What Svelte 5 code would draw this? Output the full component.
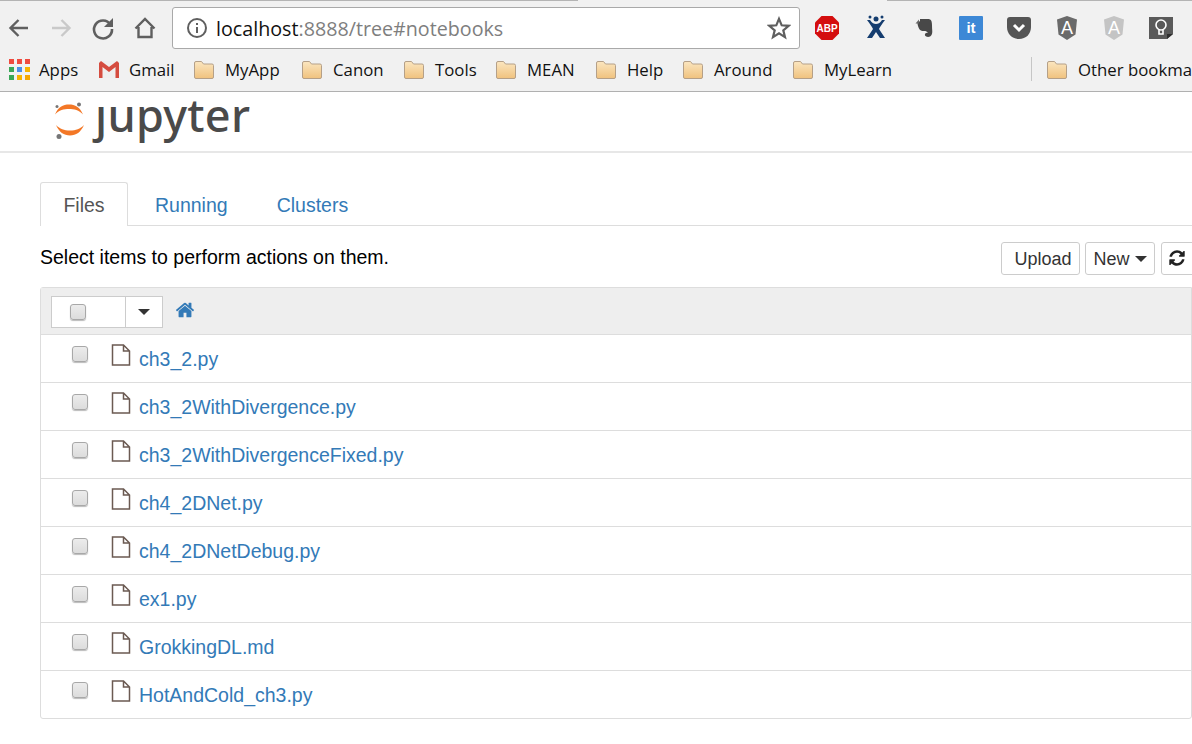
<script>
  const bookmarks = [
    { name: 'MyApp', w: 108 },
    { name: 'Canon', w: 102 },
    { name: 'Tools', w: 92 },
    { name: 'MEAN', w: 100 },
    { name: 'Help', w: 87 },
    { name: 'Around', w: 110 },
    { name: 'MyLearn', w: 239 }
  ];
  const files = [
    'ch3_2.py',
    'ch3_2WithDivergence.py',
    'ch3_2WithDivergenceFixed.py',
    'ch4_2DNet.py',
    'ch4_2DNetDebug.py',
    'ex1.py',
    'GrokkingDL.md',
    'HotAndCold_ch3.py'
  ];
  const appColors = ['#ef4b3f', '#ef4b3f', '#ef4b3f', '#3aa757', '#4a90e8', '#f6b400', '#3aa757', '#f6b400', '#f6a800'];
</script>

{#snippet folder()}
  <svg class="folder" width="22" height="19" viewBox="0 0 22 19">
    <defs>
      <linearGradient id="fold" x1="0" y1="0" x2="0" y2="1">
        <stop offset="0" stop-color="#fbe6c0" />
        <stop offset="1" stop-color="#f0c27e" />
      </linearGradient>
    </defs>
    <path d="M1.500 17V3q0-1.500 1.500-1.500h5.500l2 2.500H19q1.500 0 1.500 1.500V17q0 1.500-1.500 1.500H3q-1.500 0-1.500-1.500z" fill="url(#fold)" stroke="#b5a088" />
  </svg>
{/snippet}

<div class="chrome">
  <div class="strip"></div>
  <div class="toolbar">
    <div class="nav">
      <svg width="28" height="28" viewBox="0 0 28 28"><path d="M23 14H6M13.500 6L5.500 14l8 8" fill="none" stroke="#5f5f5f" stroke-width="2.400" /></svg>
      <svg width="28" height="28" viewBox="0 0 28 28"><path d="M5 14h17M14.500 6l8 8-8 8" fill="none" stroke="#c9c9c9" stroke-width="2.400" /></svg>
      <svg width="28" height="28" viewBox="0 0 28 28"><path d="M21.500 10.500A9 9 0 1 0 23 15" fill="none" stroke="#5f5f5f" stroke-width="2.600" /><path d="M24 4v9h-9z" fill="#5f5f5f" /></svg>
      <svg width="28" height="28" viewBox="0 0 28 28"><path d="M4.500 14.500L14 5l9.500 9.500M7.500 13v10h13V13" fill="none" stroke="#5f5f5f" stroke-width="2.400" /></svg>
    </div>
    <div class="omnibox">
      <svg width="22" height="22" viewBox="0 0 22 22"><circle cx="11" cy="11" r="9" fill="none" stroke="#5f5f5f" stroke-width="2" /><path d="M10 10h2v6h-2zM10 6h2v2h-2z" fill="#5f5f5f" /></svg>
      <span class="url"><b>localhost</b>:8888/tree#notebooks</span>
      <svg class="star" width="24" height="24" viewBox="0 0 24 24"><path d="M12 2.800l2.700 6.500 7 .5-5.400 4.500 1.700 6.800-6-3.700-6 3.700 1.700-6.800L2.300 9.800l7-.5z" fill="none" stroke="#5f5f5f" stroke-width="2.200" /></svg>
    </div>
    <div class="extensions">
      <svg width="26" height="26" viewBox="0 0 26 26"><path d="M7.500 1h11L25 7.500v11L18.500 25h-11L1 18.500v-11z" fill="#d40e0e" /><text x="13" y="17" text-anchor="middle" class="abp">ABP</text></svg>
      <svg width="26" height="28" viewBox="0 0 26 28"><circle cx="13" cy="5" r="2.500" fill="#153d6f" /><circle cx="7" cy="3" r="1.500" fill="#153d6f" /><circle cx="19" cy="3" r="1.500" fill="#153d6f" /><path d="M4 6c3 4 5 7 6 9l-6 9h5l4-6 4 6h5l-6-9c1-2 3-5 6-9h-3c-2 3-4 4-6 4s-4-1-6-4z" fill="#153d6f" /></svg>
      <svg width="24" height="24" viewBox="0 0 24 24"><path d="M8 5V3h8c3 0 4 2 4 6 0 6 1 7-.5 10-1 2.500-5.500 2.500-6.500.500-.5-2 1-3 3-2.500-1-1.500-2-2-4-2-2.500 0-4-.5-5-2.500-1-2-1.500-4-1.500-5.500z" fill="#484848" /><path d="M3.500 7.500L7 3.500v4z" fill="#666" /></svg>
      <div class="it">it</div>
      <svg width="26" height="24" viewBox="0 0 26 24"><path d="M1 4q0-3 3-3h18q3 0 3 3v7c0 7-5 12-12 12S1 18 1 11z" fill="#555" /><path d="M8 9l5 5 5-5" fill="none" stroke="#fff" stroke-width="3" /></svg>
      <svg width="24" height="26" viewBox="0 0 24 26"><path d="M12 1l10 3.500-1.500 15L12 25l-8.500-5.500L2 4.500z" fill="#6a6a6a" /><text x="12" y="19" text-anchor="middle" class="ng">A</text></svg>
      <svg width="24" height="26" viewBox="0 0 24 26"><path d="M12 1l10 3.500-1.500 15L12 25l-8.500-5.500L2 4.500z" fill="#c4c4c4" /><text x="12" y="19" text-anchor="middle" class="ng">A</text></svg>
      <svg width="24" height="24" viewBox="0 0 24 24"><path d="M0 1h24v17l-6 5H0z" fill="#5a5a5a" /><path d="M18 23v-5h6z" fill="#2e2e2e" /><circle cx="12" cy="9" r="5" fill="none" stroke="#fff" stroke-width="1.600" /><path d="M10 14v4h4v-4" fill="none" stroke="#fff" stroke-width="1.600" /></svg>
    </div>
  </div>
  <div class="bookmarks">
    <div class="bm apps">
      <div class="grid">
        {#each appColors as c}
          <i style:background={c}></i>
        {/each}
      </div>
      Apps
    </div>
    <div class="bm gmail">
      <svg width="22" height="18" viewBox="0 0 22 18"><path d="M1 1h20v17H1z" fill="#efefef" /><path d="M1 3v15h3.500V7L11 12l6.500-5v11H21V3l-2-2-8 6-8-6z" fill="#d54c3f" /></svg>
      Gmail
    </div>
    {#each bookmarks as b}
      <div class="bm" style:width="{b.w}px">
        {@render folder()}
        {b.name}
      </div>
    {/each}
    <div class="divider"></div>
    <div class="bm other">
      {@render folder()}
      Other bookmarks
    </div>
  </div>
</div>

<header class="brand">
  <svg width="36" height="42" viewBox="0 0 36 42">
    <path d="M3 13.500C6 6 11 3.500 17 3.500S28 6 31 13.500C27 9 22 8 17 8S7 9 3 13.500z" fill="#f37726" />
    <path d="M4 24C8 28 12 29.500 18 29.500S28 28 32 24C29 31 24 34.500 18 34.500S7 31 4 24z" fill="#f37726" />
    <circle cx="27" cy="3.500" r="2" fill="#767677" />
    <circle cx="5" cy="5.500" r="1.500" fill="#767677" />
    <circle cx="7" cy="35.500" r="2.500" fill="#767677" />
  </svg>
  <span class="wordmark">ȷupyter</span>
</header>

<main>
  <nav class="tabs">
    <div class="tab active">Files</div>
    <div class="tab">Running</div>
    <div class="tab">Clusters</div>
  </nav>
  <div class="actions">
    <span class="hint">Select items to perform actions on them.</span>
    <div class="buttons">
      <div class="btn upload">Upload</div>
      <div class="btn new">New <i class="caret"></i></div>
      <div class="btn refresh">
        <svg width="18" height="18" viewBox="0 0 1792 1792"><path d="M1639 1056q0 5-1 7-64 268-268 434.500t-478 166.500q-146 0-282.500-55t-243.500-157l-129 129q-19 19-45 19t-45-19-19-45v-448q0-26 19-45t45-19h448q26 0 45 19t19 45-19 45l-137 137q71 66 161 102t187 36q134 0 250-65t186-179q11-17 53-117 8-23 30-23h192q13 0 22.500 9.500t9.500 22.500zm25-800v448q0 26-19 45t-45 19h-448q-26 0-45-19t-19-45 19-45l138-138q-148-137-349-137-134 0-250 65t-186 179q-11 17-53 117-8 23-30 23h-199q-13 0-22.500-9.500t-9.500-22.500v-7q65-268 270-434.500t480-166.500q146 0 284 55.500t245 156.500l130-129q19-19 45-19t45 19 19 45z" fill="#222" /></svg>
      </div>
    </div>
  </div>
  <section class="list">
    <div class="list-head">
      <div class="select">
        <div class="select-box"><input type="checkbox" /></div>
        <div class="select-caret"><i class="caret dark"></i></div>
      </div>
      <svg class="home" width="20" height="20" viewBox="0 0 1792 1792"><path d="M1472 992v480q0 26-19 45t-45 19h-384v-384h-256v384h-384q-26 0-45-19t-19-45v-480q0-1 .5-3t.5-3l575-474 575 474q1 2 1 6zm223-69l-62 74q-8 9-21 11h-3q-13 0-21-7l-692-577-692 577q-12 8-24 7-13-2-21-11l-62-74q-8-10-7-23.500t11-21.500l719-599q32-26 76-26t76 26l244 204v-195q0-14 9-23t23-9h192q14 0 23 9t9 23v408l219 182q10 8 11 21.500t-7 23.500z" fill="#337ab7" /></svg>
    </div>
    {#each files as f}
      <div class="row">
        <input type="checkbox" />
        <svg class="file" width="20" height="22" viewBox="0 0 20 22"><path d="M1.500 1h11l6 6v14h-17zM12.500 1v6h6" fill="none" stroke="#6b5a52" stroke-width="1.500" /></svg>
        <span class="fname">{f}</span>
      </div>
    {/each}
  </section>
</main>

<style>
  :global(body) {
    background: #fff;
    overflow: hidden;
    font-family: "Liberation Sans", Arial, sans-serif;
  }

  .chrome {
    height: 92px;
    box-sizing: border-box;
    background: #f1f1f1;
    border-bottom: 1px solid #b0b0b0;
    font-family: "Open Sans", sans-serif;
    overflow: hidden;
  }

  .strip {
    height: 1px;
    background: linear-gradient(to right, #b4b4b4 578px, #f1f1f1 578px, #f1f1f1 887px, #b4b4b4 887px);
  }

  .toolbar {
    display: flex;
    align-items: center;
    height: 42px;
    margin-top: 6px;
  }

  .nav {
    display: flex;
    width: 172px;
    box-sizing: border-box;
    padding-left: 5px;
    gap: 14px;
  }

  .omnibox {
    width: 628px;
    height: 42px;
    box-sizing: border-box;
    display: flex;
    align-items: center;
    background: #fff;
    border: 1px solid #a9a9a9;
    border-radius: 3px;
    padding: 0 8px 0 13px;
  }

  .url {
    margin-left: 8px;
    font-size: 19.700px;
    color: #7e7e7e;
  }

  .url b {
    font-weight: 400;
    color: #111;
  }

  .star {
    margin-left: auto;
  }

  .extensions {
    display: flex;
    align-items: center;
    padding-left: 14px;
    gap: 23px;
  }

  .abp {
    font: 700 10px "Liberation Sans", sans-serif;
    fill: #fff;
  }

  .ng {
    font: 400 18px "Liberation Sans", sans-serif;
    fill: #fff;
  }

  .it {
    width: 24px;
    height: 24px;
    background: #3d88d6;
    border-radius: 1px;
    color: #fff;
    font: 700 15px/24px "Liberation Sans", sans-serif;
    text-align: center;
  }

  .bookmarks {
    display: flex;
    align-items: center;
    height: 38px;
    margin-top: 1px;
    font-size: 16.800px;
    color: #111;
  }

  .bm {
    display: flex;
    flex: none;
    align-items: center;
    gap: 10px;
    white-space: nowrap;
  }

  .apps {
    width: 98px;
    padding-left: 9px;
    box-sizing: border-box;
    gap: 9px;
  }

  .grid {
    display: grid;
    grid-template-columns: repeat(3, 5px);
    gap: 3px;
  }

  .grid i {
    height: 5px;
  }

  .gmail {
    width: 95px;
    gap: 9px;
  }

  .divider {
    width: 1px;
    height: 24px;
    background: #c6c6c6;
    flex: none;
  }

  .other {
    margin-left: 14px;
  }

  .brand {
    height: 61px;
    box-sizing: border-box;
    border-bottom: 2px solid #e7e7e7;
    display: flex;
    align-items: center;
    padding-left: 52px;
  }

  .wordmark {
    font: 500 45px/1 "Noto Sans", sans-serif;
    letter-spacing: 0.3px;
    color: #4a4a4a;
    margin-left: 7px;
    margin-top: -14px;
  }

  main {
    padding: 29px 0 0 40px;
    font-size: 19.500px;
  }

  .tabs {
    display: flex;
    border-bottom: 1px solid #ddd;
    height: 43px;
  }

  .tab {
    padding: 0 22px 0 27px;
    line-height: 47px;
    color: #337ab7;
  }

  .tab.active {
    box-sizing: border-box;
    width: 88px;
    height: 44px;
    padding: 0;
    line-height: 45px;
    text-align: center;
    color: #555;
    background: #fff;
    border: 1px solid #ddd;
    border-bottom: 0;
    border-radius: 3px 3px 0 0;
  }

  .actions {
    display: flex;
    justify-content: space-between;
    align-items: center;
    height: 34px;
    margin-top: 15px;
  }

  .hint {
    color: #000;
    margin-top: -1px;
  }

  .buttons {
    display: flex;
    gap: 5px;
    width: 191px;
    flex: none;
    overflow: hidden;
    font-size: 18px;
    color: #333;
  }

  .btn {
    box-sizing: border-box;
    flex: none;
    height: 33px;
    padding-top: 2px;
    border: 1px solid #ccc;
    border-radius: 3px;
    display: flex;
    align-items: center;
    justify-content: center;
    background: #fff;
  }

  .upload {
    width: 79px;
    padding-left: 5px;
  }

  .new {
    width: 70px;
    gap: 5px;
  }

  .refresh {
    width: 34px;
    margin-left: 1px;
    padding-right: 2px;
    padding-top: 0;
  }

  .caret {
    display: block;
    border-top: 6px solid #333;
    border-left: 6px solid transparent;
    border-right: 6px solid transparent;
  }

  .list {
    margin-top: 12px;
    border: 1px solid #ddd;
    border-radius: 3px 0 3px 3px;
  }

  .list-head {
    height: 46px;
    display: flex;
    align-items: center;
    background: #eee;
    padding-left: 10px;
  }

  .select {
    display: flex;
    height: 32px;
    width: 112px;
    box-sizing: border-box;
    background: #fff;
    border: 1px solid #ccc;
    margin-top: 2px;
  }

  .select-box {
    width: 74px;
    display: flex;
    align-items: center;
    padding-left: 18px;
    box-sizing: border-box;
    border-right: 1px solid #ccc;
  }

  .select-caret {
    flex: 1;
    display: flex;
    align-items: center;
    justify-content: center;
  }

  .home {
    margin-left: 12px;
    margin-top: -2px;
  }

  input[type="checkbox"] {
    appearance: none;
    width: 16px;
    height: 16px;
    margin: 0;
    flex: none;
    border-radius: 3px;
    border: 1px solid #a8a8a8;
    background: linear-gradient(#ececec, #dcdcdc);
    box-shadow: 0 1px 1px #bbb;
  }

  .row {
    height: 48px;
    box-sizing: border-box;
    border-top: 1px solid #ddd;
    display: flex;
    align-items: center;
    padding-left: 31px;
  }

  .row input {
    margin-top: -10px;
  }

  .file {
    margin-left: 23px;
    margin-top: -7px;
  }

  .fname {
    margin-left: 8px;
    margin-top: 2px;
    color: #337ab7;
  }
</style>
